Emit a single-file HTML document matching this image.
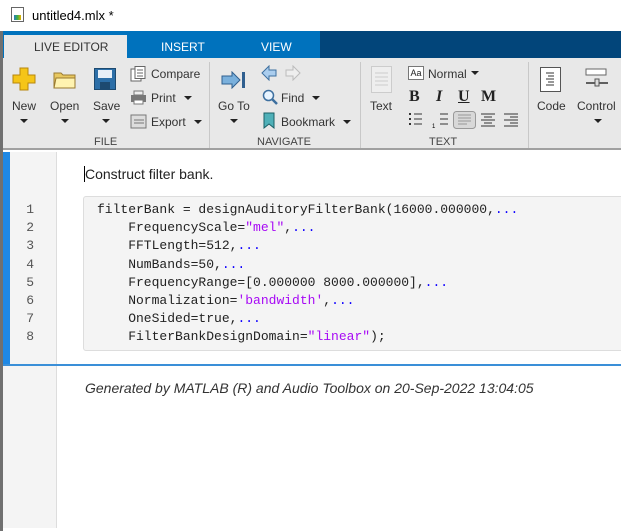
<!DOCTYPE html>
<html><head><style>
*{margin:0;padding:0;box-sizing:border-box}
body{width:621px;height:528px;overflow:hidden;position:relative;background:#fff;font-family:"Liberation Sans",sans-serif;color:#222}
.a{position:absolute}
.t{font-size:12px;color:#333;white-space:nowrap}
.tri{width:0;height:0;border-left:4px solid transparent;border-right:4px solid transparent;border-top:4px solid #222;position:absolute}
.code{font-family:"Liberation Mono",monospace;font-size:13px;line-height:18.2px;white-space:pre;color:#222}
.s{color:#a709f5}.d{color:#0e00ff}
.ln{font-family:"Liberation Mono",monospace;font-size:13px;line-height:18.2px;color:#555;text-align:right}
</style></head><body>
<!-- title -->
<div class="a" style="left:0;top:0;width:621px;height:31px;background:#fff"></div>
<div class="a" style="left:11px;top:7px;width:13px;height:15px;border:1px solid #666;background:#fff"></div>
<div class="a" style="left:14px;top:15px;width:7px;height:5px;background:linear-gradient(90deg,#2a7bc0,#3cb043,#e6b000)"></div>
<div class="a" style="left:32px;top:8px;font-size:13px;color:#000">untitled4.mlx *</div>
<!-- tabs -->
<div class="a" style="left:0;top:31px;width:621px;height:27px;background:#0072bd"></div>
<div class="a" style="left:320px;top:31px;width:301px;height:27px;background:#02457a"></div>
<div class="a" style="left:0;top:31px;width:3px;height:500px;background:#707070"></div>
<div class="a" style="left:4px;top:35px;width:123px;height:24px;background:#e8e8e8"></div>
<div class="a" style="left:34px;top:40px;font-size:12px;color:#333">LIVE EDITOR</div>
<div class="a" style="left:161px;top:40px;font-size:12px;color:#fff">INSERT</div>
<div class="a" style="left:261px;top:40px;font-size:12px;color:#fff">VIEW</div>
<!-- toolstrip -->
<div class="a" style="left:3px;top:58px;width:618px;height:92px;background:#e8e8e8;border-bottom:2px solid #a0a0a0"></div>
<div class="a" style="left:209px;top:62px;width:1px;height:86px;background:#c8c8c8"></div>
<div class="a" style="left:360px;top:62px;width:1px;height:86px;background:#c8c8c8"></div>
<div class="a" style="left:528px;top:62px;width:1px;height:86px;background:#c8c8c8"></div>
<!-- New -->
<svg class="a" style="left:12px;top:67px" width="24" height="24"><path d="M8 1h8v7h7v8h-7v7H8v-7H1V8h7z" fill="#f5c518" stroke="#b8860b"/></svg>
<div class="a t" style="left:12px;top:99px">New</div><div class="tri" style="left:20px;top:119px"></div>
<!-- Open -->
<svg class="a" style="left:53px;top:70px" width="24" height="20"><path d="M1 3h7l2 2h12v13H1z" fill="#e8c860" stroke="#9a7a30"/><path d="M3 8h19v10H1z" fill="#fff3b0" stroke="#9a7a30"/></svg>
<div class="a t" style="left:50px;top:99px">Open</div><div class="tri" style="left:61px;top:119px"></div>
<!-- Save -->
<svg class="a" style="left:94px;top:68px" width="22" height="22"><rect x="0.5" y="0.5" width="21" height="21" fill="#2c6fa8" stroke="#1d4a70"/><rect x="4" y="2" width="14" height="8" fill="#e8f0f8"/><rect x="6" y="14" width="10" height="7" fill="#1d4a70"/></svg>
<div class="a t" style="left:93px;top:99px">Save</div><div class="tri" style="left:102px;top:119px"></div>
<!-- compare/print/export -->
<svg class="a" style="left:130px;top:66px" width="17" height="16"><rect x="1" y="3" width="10" height="12" fill="#fff" stroke="#666"/><rect x="5" y="0.5" width="10" height="12" fill="#fff" stroke="#666"/><path d="M7 4h6M7 7h6M7 10h6" stroke="#666"/></svg>
<div class="a t" style="left:151px;top:67px">Compare</div>
<svg class="a" style="left:130px;top:90px" width="17" height="15"><rect x="1" y="5" width="15" height="7" fill="#777"/><rect x="4" y="1" width="9" height="4" fill="#eee" stroke="#777"/><rect x="4" y="10" width="9" height="4" fill="#fff" stroke="#777"/></svg>
<div class="a t" style="left:151px;top:91px">Print</div><div class="tri" style="left:184px;top:96px"></div>
<svg class="a" style="left:130px;top:114px" width="17" height="15"><rect x="1" y="1" width="15" height="13" fill="#ddd" stroke="#777"/><path d="M4 6h10M4 9h10" stroke="#777"/></svg>
<div class="a t" style="left:151px;top:115px">Export</div><div class="tri" style="left:194px;top:120px"></div>
<div class="a" style="left:94px;top:136px;font-size:11px;color:#444">FILE</div>
<!-- navigate -->
<svg class="a" style="left:221px;top:71px" width="26" height="18"><path d="M1 5h10V1l8 8-8 8v-4H1z" fill="#7ab0dc" stroke="#2f5f8f"/><rect x="21" y="1" width="3" height="16" fill="#2f5f8f"/></svg>
<div class="a t" style="left:218px;top:99px">Go To</div><div class="tri" style="left:230px;top:119px"></div>
<svg class="a" style="left:261px;top:65px" width="40" height="16"><path d="M1 8l7-7v4h7v6H8v4z" fill="#aacdee" stroke="#3d6f9f"/><path d="M39 8l-7-7v4h-7v6h7v4z" fill="#eee" stroke="#bbb"/></svg>
<svg class="a" style="left:262px;top:89px" width="17" height="17"><circle cx="6.5" cy="6.5" r="5" fill="#e8f4ff" stroke="#3d6f9f" stroke-width="1.5"/><path d="M10 10l5 5" stroke="#3d6f9f" stroke-width="2.5"/></svg>
<div class="a t" style="left:281px;top:91px">Find</div><div class="tri" style="left:312px;top:96px"></div>
<svg class="a" style="left:263px;top:112px" width="12" height="17"><path d="M1 1h10v15l-5-4-5 4z" fill="#4fb0b8" stroke="#1a5f66"/></svg>
<div class="a t" style="left:281px;top:115px">Bookmark</div><div class="tri" style="left:343px;top:120px"></div>
<div class="a" style="left:257px;top:136px;font-size:11px;color:#444">NAVIGATE</div>
<!-- text -->
<svg class="a" style="left:371px;top:66px" width="22" height="27"><rect x="0.5" y="0.5" width="20" height="26" fill="#eee" stroke="#ccc"/><path d="M4 7h13M4 11h13M4 15h13M4 19h13" stroke="#ccc"/></svg>
<div class="a t" style="left:370px;top:99px">Text</div>
<div class="a" style="left:408px;top:66px;width:16px;height:14px;border:1px solid #777;background:#fff;font-size:9px;line-height:12px;text-align:center">Aa</div>
<div class="a t" style="left:428px;top:67px">Normal</div><div class="tri" style="left:471px;top:71px"></div>
<div class="a" style="left:409px;top:88px;font-family:'Liberation Serif',serif;font-weight:bold;font-size:16px">B</div>
<div class="a" style="left:436px;top:88px;font-family:'Liberation Serif',serif;font-weight:bold;font-style:italic;font-size:16px">I</div>
<div class="a" style="left:458px;top:88px;font-family:'Liberation Serif',serif;font-weight:bold;font-size:16px;text-decoration:underline">U</div>
<div class="a" style="left:481px;top:88px;font-family:'Liberation Serif',serif;font-weight:bold;font-size:16px">M</div>
<svg class="a" style="left:407px;top:111px" width="115" height="18">
<g stroke="#333"><path d="M2 3h2M2 8h2M2 13h2" stroke-width="2"/><path d="M7 3h8M7 8h8M7 13h8"/>
<path d="M33 3h8M33 8h8M33 13h8"/></g>
<text x="25" y="17" font-size="6" font-family="Liberation Sans">1</text>
<rect x="46.5" y="0.5" width="22" height="17" rx="3" fill="#d8d8d8" stroke="#999"/>
<g stroke="#999"><path d="M51 4h13M51 7h13M51 10h13M51 13h9"/></g>
<g stroke="#333"><path d="M74 3h14M77 6h8M74 9h14M77 12h8M74 15h14"/><path d="M97 3h14M103 6h8M97 9h14M103 12h8M97 15h14"/></g></svg>
<div class="a" style="left:429px;top:136px;font-size:11px;color:#444">TEXT</div>
<!-- code/control -->
<svg class="a" style="left:540px;top:67px" width="22" height="26"><rect x="0.5" y="0.5" width="20" height="24" fill="#fff" stroke="#555"/><path d="M6 6h8M8 9h6M6 12h8M8 15h6M6 18h8" stroke="#333"/></svg>
<div class="a t" style="left:537px;top:99px">Code</div>
<svg class="a" style="left:584px;top:68px" width="26" height="20"><rect x="2" y="1" width="20" height="6" fill="#fff" stroke="#666"/><path d="M2 15h22" stroke="#333" stroke-width="1.5"/><rect x="11" y="11" width="4" height="7" fill="#ddd" stroke="#555"/></svg>
<div class="a t" style="left:577px;top:99px">Control</div><div class="tri" style="left:594px;top:119px"></div>
<!-- editor -->
<div class="a" style="left:3px;top:152px;width:54px;height:376px;background:#f4f4f4;border-right:1px solid #ddd"></div>
<div class="a" style="left:3px;top:152px;width:7px;height:213px;background:#1e88e5"></div>
<div class="a" style="left:3px;top:364px;width:618px;height:2px;background:#3a8fd8"></div>
<div class="a" style="left:84px;top:166px;font-size:14px;color:#222;border-left:1px solid #000;padding-left:0">Construct filter bank.</div>
<div class="a" style="left:83px;top:196px;width:545px;height:155px;background:#f4f4f4;border:1px solid #ddd;border-radius:3px"></div>
<div class="a ln" style="left:14px;top:201px;width:20px">1<br>2<br>3<br>4<br>5<br>6<br>7<br>8</div>
<div class="a code" style="left:97px;top:201px">filterBank = designAuditoryFilterBank(16000.000000,<span class="d">...</span>
    FrequencyScale=<span class="s">"mel"</span>,<span class="d">...</span>
    FFTLength=512,<span class="d">...</span>
    NumBands=50,<span class="d">...</span>
    FrequencyRange=[0.000000 8000.000000],<span class="d">...</span>
    Normalization=<span class="s">'bandwidth'</span>,<span class="d">...</span>
    OneSided=true,<span class="d">...</span>
    FilterBankDesignDomain=<span class="s">"linear"</span>);</div>
<div class="a" style="left:85px;top:380px;font-size:14px;font-style:italic;color:#333">Generated by MATLAB (R) and Audio Toolbox on 20-Sep-2022 13:04:05</div>
</body></html>
